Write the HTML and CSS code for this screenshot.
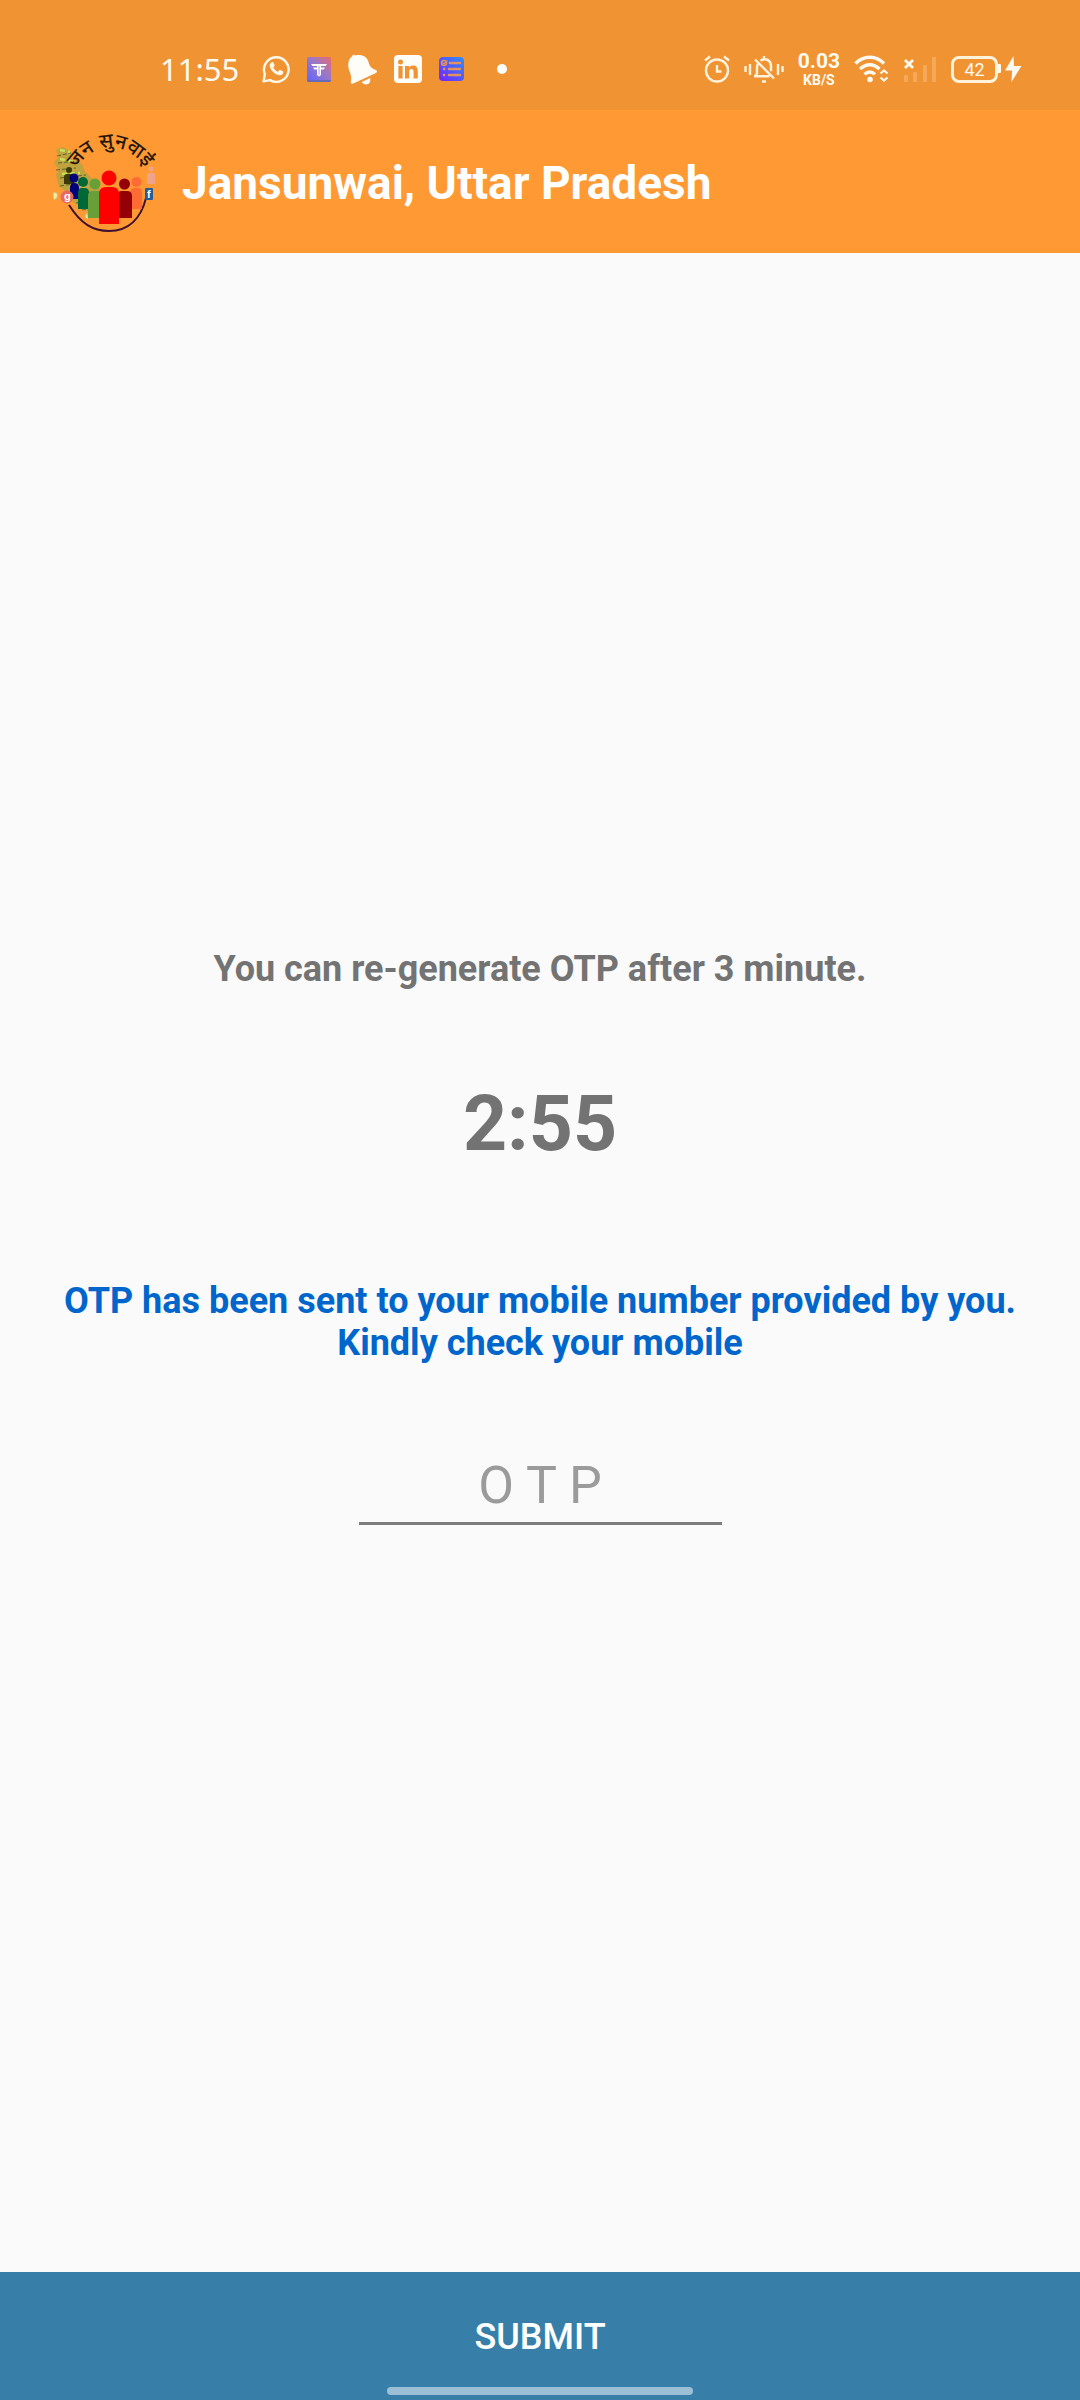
FILE: index.html
```html
<!DOCTYPE html>
<html lang="en">
<head>
<meta charset="utf-8">
<meta name="viewport" content="width=device-width, initial-scale=1">
<title>Jansunwai, Uttar Pradesh</title>
<link rel="stylesheet" href="styles.css">
</head>
<body>
<div class="status">
  <div class="status-left">
    <span class="clock">11:55</span>
    <svg width="28" height="28" viewBox="0 0 28 28" fill="none" stroke="#fff8e8" stroke-width="2.4" stroke-linejoin="round"><path d="M1.6 26.4l1.200-7.500A12.300 12.300 0 1 1 8 25.100z"/><path fill="#fff8e8" stroke="none" d="M9.700 7.300c.6-.5 1.400-.4 1.700.2l1.100 2.600c.2.5.1 1-.3 1.400l-.9 1.100c1 1.900 2.500 3.300 4.500 4.200l1.200-1.400c.4-.4.8-.5 1.300-.3l2.500 1.200c.5.3.6.7.5 1.200-.3 1.700-1.900 2.900-3.600 2.800-4.800-.7-9.600-5.300-10-9.400-.1-1.500.800-2.700 2-3.600z"/></svg>
    <svg width="24" height="25" viewBox="0 0 24 25"><defs><linearGradient id="tf" x1="0" y1="1" x2="1" y2="0"><stop offset="0.1" stop-color="#6868f6"/><stop offset="0.55" stop-color="#9a78c8"/><stop offset="1" stop-color="#e86a72"/></linearGradient></defs><rect width="24" height="25" rx="2" fill="url(#tf)"/><path d="M0 23h24v0a2 2 0 0 1-2 2H2a2 2 0 0 1-2-2z" fill="#6668b8"/><path fill="#fff" d="M4 7h16l-1.500 2H14v1.500h4l-1.300 2H14v5.500l-2 1.500-2-1.500v-5.500H7.300l-1.300-2h4V9H5.500z"/><path stroke="#9a82d4" stroke-width=".8" d="M12 9v9"/></svg>
    <svg width="29" height="31" viewBox="0 0 29 31" fill="#fffdf8"><path d="M4.200 2.300C4.400.8 6.300.3 7.300 1.500c4.700-1.200 9.700 0 12 3.700 2.500 4 .9 8.300 8.700 10.800 1.300.6 1.100 2.400-.1 3.100L5.300 29.500c-1.300.6-2.700-.2-2.500-1.600C4.700 20.500.2 17.300.2 11.500.1 8 1.300 4.300 4.200 2.300z"/><path d="M13.700 28l8.300-3.900c1 3.900-.6 5.900-3.300 6.300-2.200.2-4-.8-5-2.400z"/></svg>
    <svg width="28" height="28" viewBox="0 0 28 28"><rect width="28" height="28" rx="4" fill="#fffdf8"/><g fill="#f09333"><circle cx="6.500" cy="7" r="2.500"/><path d="M4.400 11h4.200v12.500H4.400zM11 11h4v1.800c1-1.500 2.400-2.200 4.100-2.200 3.200 0 4.700 2 4.700 5.700v7.200h-4.200V17c0-1.900-.6-2.900-2.100-2.900-1.600 0-2.300 1.100-2.300 3v6.400H11z"/></g></svg>
    <svg width="25" height="24" viewBox="0 0 25 24"><defs><linearGradient id="ls" x1="0" y1="1" x2="1" y2="0"><stop stop-color="#7622ff"/><stop offset="1" stop-color="#2d90fa"/></linearGradient></defs><rect width="25" height="24" rx="4" fill="url(#ls)"/><g stroke="#e4915f" stroke-width="2.600" stroke-linecap="round" fill="none"><path d="M11 6h10M10 12h11M10 18h11M5 12h.2M5 18h.2"/><circle cx="5" cy="6" r="2.500" stroke-width="1.500"/><path stroke-width="1.200" d="M4 6l1 1 3-3"/></g></svg>
    <span class="dot"></span>
  </div>
  <div class="status-right">
    <svg width="26" height="28" viewBox="0 0 26 28" fill="none" stroke="#fff3dc" stroke-width="2.400"><circle cx="13" cy="15.500" r="11"/><path d="M13 10v6.500h4.500M1 5.500L6 1.500M25 5.500L20 1.500"/></svg>
    <svg width="40" height="28" viewBox="0 0 40 28" fill="none" stroke="#fff3dc" stroke-width="2.400"><path d="M1.500 11v6M6 9v11M34 9v11M38.500 11v6M11 21.300l2-3V12c0-1.600.5-3 1.400-4.200M16.500 5.700c4.800-3.500 10.500-.3 10.500 5v5.500M10 21.300h15.500M11 4.500l19 19M20 1v3M18 26.500h4"/></svg>
    <span class="speed"><b>0.03</b><small>KB/S</small></span>
    <svg width="35" height="28" viewBox="0 0 35 28" fill="none" stroke="#fffaf0" stroke-width="3.400"><path d="M1.500 8.500c8-8.300 20.500-8.300 28.500 0M6 14c6-5.700 13.500-5.700 19.500 0M10.500 19.300c3.500-3 7-3 10.500 0"/><circle cx="16" cy="24.500" r="2.800" fill="#fffaf0" stroke="none"/><path stroke-width="2.200" d="M26.500 18.500l3.500-3 3.500 3M26.500 22.500l3.500 3 3.500-3"/></svg>
    <svg width="34" height="27" viewBox="0 0 34 27"><g fill="#f5a85a"><rect x="1" y="19" width="4" height="7" rx="1"/><rect x="10" y="16" width="4" height="10" rx="1"/><rect x="20" y="9" width="4" height="17" rx="1"/><rect x="29" y="1" width="4" height="25" rx="1"/></g><path d="M2 4l8 8M10 4l-8 8" stroke="#fffaf0" stroke-width="2.800"/></svg>
    <span class="charge"><span class="battery">42</span><svg width="24" height="28" viewBox="0 0 24 28" fill="#fffaf0"><path d="M0 9h2a1 1 0 0 1 1 1v7a1 1 0 0 1-1 1H0z"/><path d="M15.500 1L7 15.500h7L13.500 27 23.500 11h-7.500z"/></svg></span>
  </div>
</div>
<header class="appbar">
  <svg class="logo" width="104" height="106" viewBox="0 0 104 106" role="img" aria-label="जन सुनवाई">
    <path d="M4 22l7-3 8 5 1 8 10 4 3 8 8 7 7 10 4 9-2 14-7 4-10-6-11-7-8-12-7-4-3-12 3-5-5-8 5-5z" fill="#a8a743" opacity=".75"/>
    <path d="M5 28l14-3M6 35l20-2M4 42l20-2M8 50l26-3M8 58l26-4M18 68l20-4M24 75l20-4M30 82l16-3" stroke="#59652f" stroke-width="1" stroke-dasharray="4 2"/>
    <path d="M8 22l10 2M8 31l16 3M10 46l18-1M20 56l16 3M30 70l10 3" stroke="#c6e25c" stroke-width="2.500" stroke-dasharray="5 3"/>
    <path d="M1 65q6-2 4 5l-3 2M35 85q-4 5 1 6" fill="#f4e9a5" stroke="#c9c171"/>
    <path d="M17 77C29 96 41 103 57 103c20 0 32-13 37-33" fill="none" stroke="#40112e" stroke-width="2"/>
    <path id="arc" d="M24 41C42 12 78 10 98 48" fill="none"/>
    <text class="logo-text"><textPath href="#arc">जन सुनवाई</textPath></text>
    <g fill="#3d3a05"><circle cx="17" cy="42" r="3"/><path d="M15 46h4q3 0 3 3v7H12v-7q0-3 3-3z"/></g>
    <g fill="#efa38b"><circle cx="99" cy="41" r="2.500"/><path d="M96 45h6q1 0 1 2v9h-8v-9q0-2 1-2z"/></g>
    <g fill="#00007c"><circle cx="22" cy="50" r="4.500"/><path d="M22 55q5 0 5 5v11h-9V60q0-5 4-5z"/></g>
    <g fill="#006837"><circle cx="31" cy="54" r="5"/><path d="M30 60h3q4 0 4 5v16H26V65q0-5 4-5z"/></g>
    <g fill="#689f38"><circle cx="43" cy="56" r="5.500"/><path d="M41 63h5q4 0 4 5v22H36V68q0-5 5-5z"/></g>
    <g fill="#ff6b35"><circle cx="84.500" cy="54" r="5"/><path d="M83 60h3q4 0 4 5v16H78V65q0-5 5-5z"/></g>
    <g fill="#930006"><circle cx="72.500" cy="56" r="5.500"/><path d="M70 63h5q5 0 5 5v22H65V68q0-5 5-5z"/></g>
    <g fill="#f00"><circle cx="57" cy="50" r="7.500"/><path d="M54 59h6q7 0 7 7v30H47V66q0-7 7-7z"/></g>
    <circle cx="15" cy="69" r="6.500" fill="#e66a5f"/><text class="badge" x="12" y="72">g</text>
    <rect x="93" y="60" width="8" height="12" rx="1" fill="#245b99"/><text class="badge" x="95" y="70">f</text>
  </svg>
  <h1 class="title">Jansunwai, Uttar Pradesh</h1>
</header>
<form class="screen">
  <main class="content">
    <p class="hint">You can re-generate OTP after 3 minute.</p>
    <div class="timer">2:55</div>
    <label class="notice" for="otp">OTP has been sent to your mobile number provided by you. Kindly check your mobile</label>
    <input class="otp" id="otp" type="text" inputmode="numeric" placeholder="O T P">
  </main>
  <button class="submit" type="submit">SUBMIT</button>
  <div class="nav-pill"></div>
</form>
</body>
</html>
```

FILE: styles.css
```css
* { box-sizing: border-box; }
body {
  margin: 0;
  min-height: 100vh;
  display: flex;
  flex-direction: column;
  background: #fafafa;
  font-family: Roboto, "Liberation Sans", sans-serif;
}
svg { flex: none; display: block; }
.status {
  height: 110px;
  padding: 28px 58px 0 160px;
  display: flex;
  justify-content: space-between;
  align-items: center;
  background: #f09333;
  color: #fffaf0;
}
.status-left, .status-right { display: flex; align-items: center; }
.status-left { gap: 17px; }
.status-right { gap: 14px; }
.clock { font: 31px/40px "Noto Sans", sans-serif; margin-right: 6px; }
.dot { width: 10px; height: 10px; border-radius: 50%; background: #fff; margin-left: 16px; }
.speed { display: flex; flex-direction: column; align-items: center; font-family: Roboto, sans-serif; }
.speed b { font-size: 21px; line-height: 22px; font-weight: 700; }
.speed small { font-size: 14px; line-height: 16px; font-weight: 700; }
.charge { display: flex; align-items: center; }
.battery {
  width: 47px;
  height: 27px;
  border: 3px solid #fff3dc;
  border-radius: 8px;
  font: 18px/21px Roboto, sans-serif;
  text-align: center;
}
.appbar {
  height: 143px;
  padding: 2px 52px 0;
  display: flex;
  align-items: center;
  gap: 26px;
  background: #ff9933;
}
.logo { margin-bottom: 4px; }
.logo-text { font: 500 20px "Noto Sans Devanagari", "Noto Sans", sans-serif; fill: #24170a; }
.badge { font: bold 11px "Liberation Sans", sans-serif; fill: #fff; }
.title { margin: 0; font-size: 46px; line-height: 56px; font-weight: 700; color: #fff; }
.screen { flex: 1; display: flex; flex-direction: column; position: relative; }
.content {
  flex: 1;
  display: flex;
  flex-direction: column;
  align-items: center;
  justify-content: center;
  padding: 0 48px 52px;
  text-align: center;
}
.hint, .notice { margin: 0; font-size: 36px; line-height: 42px; font-weight: 700; }
.hint, .timer { color: #737373; }
.timer { margin: 88px 0 110px; font-size: 77px; line-height: 92px; font-weight: 700; }
.notice { color: #0066cc; }
.otp {
  width: 363px;
  max-width: 100%;
  height: 77px;
  margin-top: 84px;
  padding: 0;
  border: 0;
  border-bottom: 3px solid #7d7d7d;
  border-radius: 0;
  background: none;
  outline: 0;
  font: 52px/74px Roboto, sans-serif;
  text-align: center;
  color: #212121;
}
.otp::placeholder { color: #9b9b9b; opacity: 1; }
.submit {
  width: 100%;
  height: 128px;
  border: 0;
  padding: 2px 0 0;
  background: #377fa9;
  color: #fff;
  font: 500 36px/42px Roboto, sans-serif;
}
.nav-pill {
  position: absolute;
  bottom: 5px;
  left: 50%;
  width: 306px;
  height: 8px;
  margin-left: -153px;
  border-radius: 4px;
  background: #9bbfd5;
}
```
